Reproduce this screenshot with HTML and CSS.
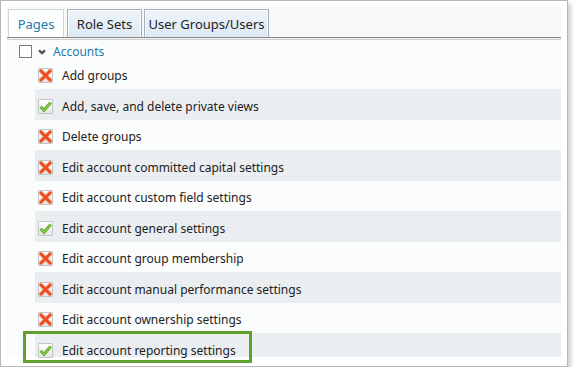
FILE: index.html
```html
<!DOCTYPE html>
<html lang="en">
<head>
    <meta charset="UTF-8">
    <title>Permissions - Pages</title>
    <link rel="stylesheet" href="styles.css">
</head>
<body>

    <div class="panel">
        <div class="tab-bar">
            <div class="tab active">Pages</div>
            <div class="tab tab-roles">Role Sets</div>
            <div class="tab tab-groups">User Groups/Users</div>
        </div>

        <div class="perm-list">
            <div class="group-row">
                <span class="checkbox"></span>
                <svg class="chevron" width="8" height="6" viewBox="0 0 8 6"><polyline points="1,1.2 4,4.2 7,1.2" fill="none" stroke="#4a4a4a" stroke-width="2.2"/></svg>
                <span class="group-name">Accounts</span>
            </div>

            <div class="perm-row">
                <span class="perm-icon deny"><svg width="13" height="13" viewBox="0 0 13 13"><path d="M2 2 L11 11 M11 2 L2 11" stroke="#f7a07a" stroke-width="4" stroke-linecap="square"/><path d="M2 2 L11 11 M11 2 L2 11" stroke="#ee4b22" stroke-width="2.6" stroke-linecap="square"/></svg></span>
                <span class="perm-label">Add groups</span>
            </div>
            <div class="perm-row alt">
                <span class="perm-icon allow"><svg width="13" height="13" viewBox="0 0 13 13"><polyline points="1.5,6.8 5,10.3 11.8,2.5" fill="none" stroke="#5aa62a" stroke-width="3"/><polyline points="1.5,6.8 5,10.3 11.8,2.5" fill="none" stroke="#8bd24a" stroke-width="1.2"/></svg></span>
                <span class="perm-label">Add, save, and delete private views</span>
            </div>
            <div class="perm-row">
                <span class="perm-icon deny"><svg width="13" height="13" viewBox="0 0 13 13"><path d="M2 2 L11 11 M11 2 L2 11" stroke="#f7a07a" stroke-width="4" stroke-linecap="square"/><path d="M2 2 L11 11 M11 2 L2 11" stroke="#ee4b22" stroke-width="2.6" stroke-linecap="square"/></svg></span>
                <span class="perm-label">Delete groups</span>
            </div>
            <div class="perm-row alt">
                <span class="perm-icon deny"><svg width="13" height="13" viewBox="0 0 13 13"><path d="M2 2 L11 11 M11 2 L2 11" stroke="#f7a07a" stroke-width="4" stroke-linecap="square"/><path d="M2 2 L11 11 M11 2 L2 11" stroke="#ee4b22" stroke-width="2.6" stroke-linecap="square"/></svg></span>
                <span class="perm-label">Edit account committed capital settings</span>
            </div>
            <div class="perm-row">
                <span class="perm-icon deny"><svg width="13" height="13" viewBox="0 0 13 13"><path d="M2 2 L11 11 M11 2 L2 11" stroke="#f7a07a" stroke-width="4" stroke-linecap="square"/><path d="M2 2 L11 11 M11 2 L2 11" stroke="#ee4b22" stroke-width="2.6" stroke-linecap="square"/></svg></span>
                <span class="perm-label">Edit account custom field settings</span>
            </div>
            <div class="perm-row alt">
                <span class="perm-icon allow"><svg width="13" height="13" viewBox="0 0 13 13"><polyline points="1.5,6.8 5,10.3 11.8,2.5" fill="none" stroke="#5aa62a" stroke-width="3"/><polyline points="1.5,6.8 5,10.3 11.8,2.5" fill="none" stroke="#8bd24a" stroke-width="1.2"/></svg></span>
                <span class="perm-label">Edit account general settings</span>
            </div>
            <div class="perm-row">
                <span class="perm-icon deny"><svg width="13" height="13" viewBox="0 0 13 13"><path d="M2 2 L11 11 M11 2 L2 11" stroke="#f7a07a" stroke-width="4" stroke-linecap="square"/><path d="M2 2 L11 11 M11 2 L2 11" stroke="#ee4b22" stroke-width="2.6" stroke-linecap="square"/></svg></span>
                <span class="perm-label">Edit account group membership</span>
            </div>
            <div class="perm-row alt">
                <span class="perm-icon deny"><svg width="13" height="13" viewBox="0 0 13 13"><path d="M2 2 L11 11 M11 2 L2 11" stroke="#f7a07a" stroke-width="4" stroke-linecap="square"/><path d="M2 2 L11 11 M11 2 L2 11" stroke="#ee4b22" stroke-width="2.6" stroke-linecap="square"/></svg></span>
                <span class="perm-label">Edit account manual performance settings</span>
            </div>
            <div class="perm-row">
                <span class="perm-icon deny"><svg width="13" height="13" viewBox="0 0 13 13"><path d="M2 2 L11 11 M11 2 L2 11" stroke="#f7a07a" stroke-width="4" stroke-linecap="square"/><path d="M2 2 L11 11 M11 2 L2 11" stroke="#ee4b22" stroke-width="2.6" stroke-linecap="square"/></svg></span>
                <span class="perm-label">Edit account ownership settings</span>
            </div>
            <div class="perm-row alt last">
                <span class="perm-icon allow"><svg width="13" height="13" viewBox="0 0 13 13"><polyline points="1.5,6.8 5,10.3 11.8,2.5" fill="none" stroke="#5aa62a" stroke-width="3"/><polyline points="1.5,6.8 5,10.3 11.8,2.5" fill="none" stroke="#8bd24a" stroke-width="1.2"/></svg></span>
                <span class="perm-label">Edit account reporting settings</span>
            </div>
        </div>

        <!-- callout drawn over the last row -->
        <div class="callout"></div>
    </div>

</body>
</html>
```

FILE: styles.css
```css
:root {
    --link-blue: #1f78b0;
    --row-alt: #ebeef1;
    --row-bg: #fbfcfc;
    --text-color: #222;
    --callout-green: #5fa12c;
}

* { box-sizing: border-box; margin: 0; padding: 0; }

body {
    font-family: 'Noto Sans', 'Open Sans', sans-serif;
    font-size: 12px;
    color: var(--text-color);
    background-color: #fff;
}

.panel {
    position: relative;
    width: 568px;
    height: 367px;
    border: 1px solid #b8b8b8;
    padding: 6px 6px 0;
    background-color: #fff;
    box-shadow: 3px 3px 4px rgba(0,0,0,0.18);
}

/* tabs */
.tab-bar {
    display: flex;
    gap: 3px;
    height: 31px;
    padding: 2px 0 0 1px;
    background-color: #f8f8f8;
    border-bottom: 1px solid #8a8a8a;
    box-shadow: 0 1px 0 #f3f3f3, 0 2px 0 #d0d0d0;
}

.tab {
    display: flex;
    align-items: center;
    justify-content: center;
    height: 28px;
    font-size: 13px;
    color: #222;
    border: 1px solid #a7b0b8;
    border-bottom: none;
    background: linear-gradient(#eef4fa, #dce8f3);
    box-shadow: inset 1px 1px 0 #fafcfe, inset -1px 0 0 #f4f8fc;
}

.tab.active {
    width: 56px;
    color: var(--link-blue);
    background: #fdfefe;
    border-color: #cdd6dd;
    box-shadow: none;
}

.tab-roles { width: 75px; }
.tab-groups { width: 125px; margin-left: -1px; }

/* permission list */
.perm-list {
    height: 317px;
    margin-top: 2px;
    background-color: var(--row-bg);
}

.group-row {
    display: flex;
    align-items: center;
    height: 18.5px;
    padding: 5px 0 0 12px;
}

.checkbox {
    width: 13px;
    height: 13px;
    border: 1px solid #7a7a7a;
    background-color: #fff;
}

.chevron {
    margin-left: 6px;
}

.group-name {
    margin-left: 7px;
    color: var(--link-blue);
}

.perm-row {
    display: flex;
    align-items: center;
    height: 30.5px;
    margin-left: 28px;
    padding: 4px 0 0 3px;
}

.perm-row.alt {
    background-color: var(--row-alt);
}

/* the last row is cut by the bottom of the list */
.perm-row.last {
    height: 24px;
    padding-top: 10px;
}

.perm-icon {
    display: flex;
    align-items: center;
    justify-content: center;
    width: 15px;
    height: 15px;
    border: 1px solid #c4c4c4;
    border-radius: 1px;
    background: linear-gradient(#ffffff, #e6e6e6);
}

.perm-label {
    margin-left: 9px;
}

.callout {
    position: absolute;
    left: 22px;
    top: 330px;
    width: 229px;
    height: 32px;
    border: 3px solid var(--callout-green);
}
```
